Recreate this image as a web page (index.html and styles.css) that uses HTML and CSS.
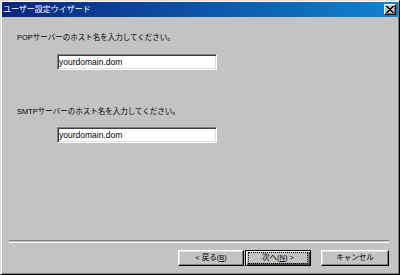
FILE: index.html
```html
<!DOCTYPE html>
<html lang="ja">
<head>
<meta charset="utf-8">
<title>ユーザー設定ウイザード</title>
<link rel="stylesheet" href="styles.css">
</head>
<body>
<div class="window">
  <div class="titlebar">
    <span class="title">ユーザー設定ウイザード</span>
    <span class="close">
      <svg width="8" height="7" viewBox="0 0 8 7"><path d="M0 0h2v1h1v1h2V1h1V0h2v1H7v1H6v1H5v1h1v1h1v1h1v1H6V6H5V5H3v1H2v1H0V6h1V5h1V4h1V3H2V2H1V1H0z" fill="#000"/></svg>
    </span>
  </div>
  <div class="content">
    <div class="label">POPサーバーのホスト名を入力してください。</div>
    <div class="field">yourdomain.dom</div>
    <div class="label label2">SMTPサーバーのホスト名を入力してください。</div>
    <div class="field">yourdomain.dom</div>
  </div>
  <div class="separator"></div>
  <div class="buttons">
    <div class="btn">&lt; 戻る(<u>B</u>)</div>
    <div class="btn default"><span class="focus">次へ(<u>N</u>) &gt;</span></div>
    <div class="btn cancel">キャンセル</div>
  </div>
</div>
</body>
</html>
```
FILE: styles.css
```css
html, body {
  margin: 0;
  padding: 0;
  background: #c3c3c3;
}
body {
  font-family: "Liberation Sans", "Noto Sans CJK JP", sans-serif;
  color: #000;
}
.window {
  width: 400px;
  height: 275px;
  box-sizing: border-box;
  border: 1px solid;
  border-color: #dfdfdf #000 #000 #dfdfdf;
  box-shadow: inset 1px 1px #fff, inset -1px -1px #808080;
  padding: 1px;
  display: flex;
  flex-direction: column;
  background: #c3c3c3;
}
.titlebar {
  height: 15px;
  background: linear-gradient(to right, #0a2480, #1084d0);
  display: flex;
  align-items: center;
  justify-content: space-between;
  padding: 0 2px 0 1px;
}
.title {
  color: #fff;
  font-size: 8px;
  font-weight: normal;
  line-height: 15px;
}
.close {
  width: 12px;
  height: 11px;
  box-sizing: border-box;
  background: #c3c3c3;
  border: 1px solid;
  border-color: #fff #000 #000 #fff;
  box-shadow: inset -1px -1px #808080;
  display: flex;
  align-items: center;
  justify-content: center;
}
.content {
  flex: 1;
  padding: 15px 0 0 15px;
  display: flex;
  flex-direction: column;
  align-items: flex-start;
}
.label {
  font-size: 7.5px;
  line-height: 12px;
  height: 12px;
  margin-bottom: 10px;
}
.label2 {
  margin-top: 36px;
  margin-bottom: 9px;
}
.field {
  margin-left: 40px;
  width: 160px;
  height: 16px;
  box-sizing: border-box;
  background: #fff;
  border: 1px solid;
  border-color: #808080 #fff #fff #808080;
  box-shadow: inset 1px 1px #404040, inset -1px -1px #dfdfdf;
  font-size: 8.5px;
  line-height: 14px;
  padding-left: 1px;
  white-space: nowrap;
}
.separator {
  margin: 0 9px 0 7px;
  height: 1px;
  border-top: 1px solid #808080;
  border-bottom: 1px solid #fff;
}
.buttons {
  display: flex;
  justify-content: flex-end;
  padding: 7px 9px 7px 0;
  gap: 1px;
}
.btn {
  width: 66px;
  height: 16px;
  box-sizing: border-box;
  border: 1px solid;
  border-color: #fff #000 #000 #fff;
  box-shadow: inset -1px -1px #808080, inset 1px 1px #dfdfdf;
  font-size: 7.5px;
  line-height: 14px;
  text-align: center;
  display: flex;
  align-items: center;
  justify-content: center;
}
.default {
  border: 1px solid #000;
  box-shadow: inset 1px 1px #fff, inset -1px -1px #404040, inset -2px -2px #808080;
}
.focus {
  display: block;
  width: 58px;
  height: 10px;
  line-height: 10px;
  outline: 1px dotted #000;
  text-align: center;
}
.cancel {
  margin-left: 9px;
  width: 68px;
}
```
